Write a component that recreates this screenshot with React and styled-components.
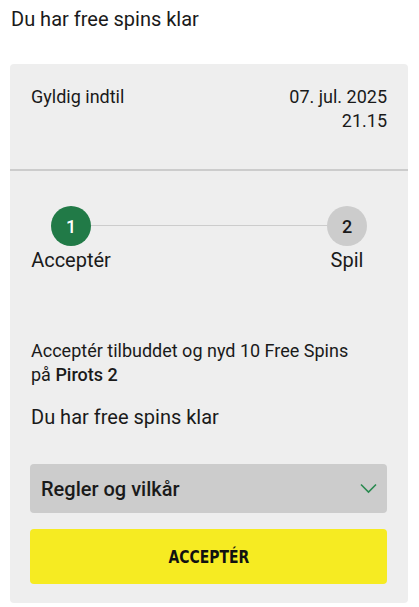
import React from 'react';
import styled, { createGlobalStyle } from 'styled-components';

const GlobalStyle = createGlobalStyle`
  * { box-sizing: border-box; }
  body {
    margin: 0;
    background: #ffffff;
    font-family: Roboto, "Liberation Sans", Arial, sans-serif;
    color: #1a1a1a;
  }
`;

const Page = styled.div`
  padding: 7px 11px 0 10px;
`;

const Title = styled.h1`
  margin: 0 0 33px 1px;
  font-size: 20px;
  line-height: 24px;
  font-weight: 400;
`;

const Card = styled.div`
  background: #eeeeee;
  border-radius: 4px;
  overflow: hidden;
`;

const ValidRow = styled.div`
  display: flex;
  justify-content: space-between;
  padding: 21px 21px 36px;
  font-size: 18px;
  line-height: 24px;
  border-bottom: 2px solid #cccccc;
`;

const DateBox = styled.div`
  text-align: right;
`;

const Body = styled.div`
  padding: 35px 21px 19px 20px;
`;

const Stepper = styled.div`
  display: flex;
  align-items: flex-start;
  padding: 0 0 0 1px;
  margin-bottom: 67px;
`;

const Step = styled.div`
  width: 80px;
  display: flex;
  flex-direction: column;
  align-items: center;
  flex-shrink: 0;
  position: relative;
  z-index: 1;
`;

const Circle = styled.div`
  width: 40px;
  height: 40px;
  border-radius: 50%;
  display: flex;
  align-items: center;
  justify-content: center;
  font-size: 18px;
  font-weight: 500;
  background: ${(p) => (p.$active ? '#217a47' : '#cccccc')};
  color: ${(p) => (p.$active ? '#ffffff' : '#1a1a1a')};
`;

const StepLabel = styled.div`
  margin-top: 2px;
  font-size: 20px;
  line-height: 24px;
  white-space: nowrap;
`;

const Connector = styled.div`
  flex: 1;
  height: 1px;
  margin: 19px -20px 0;
  background: #cccccc;
`;

const Offer = styled.p`
  margin: 0 0 18px 1px;
  font-size: 18px;
  line-height: 24px;
  b { font-weight: 500; }
`;

const Ready = styled.p`
  margin: 0 0 35px 1px;
  font-size: 20px;
  line-height: 24px;
`;

const Dropdown = styled.button`
  width: 100%;
  height: 49px;
  display: flex;
  align-items: center;
  justify-content: space-between;
  padding: 0 10px 0 11px;
  border: none;
  border-radius: 4px;
  background: #cccccc;
  font-family: inherit;
  font-size: 20px;
  font-weight: 500;
  color: #1a1a1a;
  margin-bottom: 16px;
`;

const AcceptButton = styled.button`
  width: 100%;
  height: 55px;
  border: none;
  border-radius: 4px;
  background: #f6eb22;
  color: #111111;
  font-family: "Liberation Sans Narrow", "DejaVu Sans Condensed", "Liberation Sans", sans-serif;
  font-size: 18px;
  font-weight: 700;

  span {
    display: inline-block;
    transform: scaleX(0.86);
  }
`;

const Chevron = () => (
  <svg width="17" height="11" viewBox="0 0 17 11" fill="none">
    <path d="M1 1.5 L8.5 9 L16 1.5" stroke="#2a8a50" strokeWidth="1.6" />
  </svg>
);

const App = () => {
  return (
    <Page>
      <GlobalStyle />
      <Title>Du har free spins klar</Title>
      <Card>
        <ValidRow>
          <div>Gyldig indtil</div>
          <DateBox>
            07. jul. 2025
            <br />
            21.15
          </DateBox>
        </ValidRow>
        <Body>
          <Stepper>
            <Step>
              <Circle $active>1</Circle>
              <StepLabel>Acceptér</StepLabel>
            </Step>
            <Connector />
            <Step>
              <Circle>2</Circle>
              <StepLabel>Spil</StepLabel>
            </Step>
          </Stepper>
          <Offer>
            Acceptér tilbuddet og nyd 10 Free Spins
            <br />
            på <b>Pirots 2</b>
          </Offer>
          <Ready>Du har free spins klar</Ready>
          <Dropdown>
            <span>Regler og vilkår</span>
            <Chevron />
          </Dropdown>
          <AcceptButton>
            <span>ACCEPTÉR</span>
          </AcceptButton>
        </Body>
      </Card>
    </Page>
  );
};

export default App;
